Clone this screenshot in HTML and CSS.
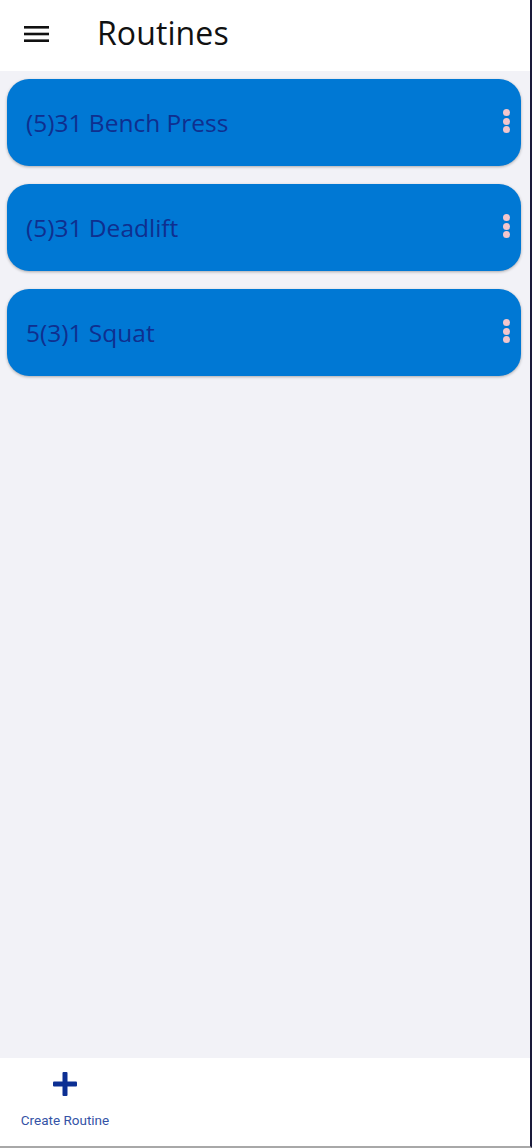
FILE: index.html
```html
<!DOCTYPE html>
<html>
<head>
<meta charset="utf-8">
<link rel="stylesheet" href="styles.css">
</head>
<body>
<div class="app">
  <header class="topbar">
    <svg class="menu" width="26" height="20" viewBox="0 0 26 20"><rect x="0" y="2" width="25" height="2.6" fill="#111"/><rect x="0" y="8.7" width="25" height="2.6" fill="#111"/><rect x="0" y="15.4" width="25" height="2.6" fill="#111"/></svg>
    <h1 class="title">Routines</h1>
  </header>
  <main class="list">
    <div class="card"><span class="name">(5)31 Bench Press</span><span class="dots"><i></i><i></i><i></i></span></div>
    <div class="card"><span class="name">(5)31 Deadlift</span><span class="dots"><i></i><i></i><i></i></span></div>
    <div class="card"><span class="name">5(3)1 Squat</span><span class="dots"><i></i><i></i><i></i></span></div>
  </main>
  <footer class="bottombar">
    <div class="tab">
      <svg class="plus" width="26" height="26" viewBox="0 0 26 26"><rect x="10.5" y="1" width="5" height="24" rx="1" fill="#0c2f93"/><rect x="1" y="10.5" width="24" height="5" rx="1" fill="#0c2f93"/></svg>
      <span class="label">Create Routine</span>
    </div>
  </footer>
</div>
</body>
</html>
```

FILE: styles.css
```css
html, body {
  margin: 0;
  padding: 0;
  height: 100%;
}
body {
  font-family: "Open Sans", "Noto Sans", sans-serif;
  background: #f2f2f7;
}
.app {
  height: 1146px;
  width: 530px;
  display: flex;
  flex-direction: column;
  border-right: 2px solid #1a1a3a;
  border-bottom: 2px solid #a8a8a8;
  background: #f2f2f7;
}
.topbar {
  height: 71px;
  background: #ffffff;
  display: flex;
  align-items: center;
  padding-left: 24px;
  box-sizing: border-box;
  flex: none;
}
.menu {
  display: block;
  margin-top: -4px;
}
.title {
  margin: 0 0 0 47px;
  font-weight: 400;
  font-size: 32px;
  color: #111;
  line-height: 1;
  margin-top: -5px;
  letter-spacing: 0.1px;
}
.list {
  flex: 1;
  display: flex;
  flex-direction: column;
  gap: 18px;
  padding: 8px 9px 0 7px;
}
.card {
  height: 87px;
  border-radius: 22px;
  background: #0078d4;
  box-shadow: 0 1px 3px rgba(0,0,0,0.3);
  display: flex;
  align-items: center;
  justify-content: space-between;
  padding: 0 11px 0 19px;
}
.name {
  color: #0f2f8f;
  font-size: 24.5px;
  margin-top: -1px;
}
.dots {
  display: flex;
  flex-direction: column;
  gap: 1.5px;
  margin-top: -3px;
}
.dots i {
  display: block;
  width: 7px;
  height: 7px;
  border-radius: 50%;
  background: #f4c6cc;
}
.bottombar {
  height: 88px;
  background: #ffffff;
  flex: none;
  display: flex;
}
.tab {
  width: 130px;
  display: flex;
  flex-direction: column;
  align-items: center;
  padding-top: 13px;
  box-sizing: border-box;
}
.plus {
  display: block;
}
.label {
  margin-top: 15px;
  font-family: Roboto, "Noto Sans", sans-serif;
  font-size: 13.5px;
  color: #3553a6;
}
```
